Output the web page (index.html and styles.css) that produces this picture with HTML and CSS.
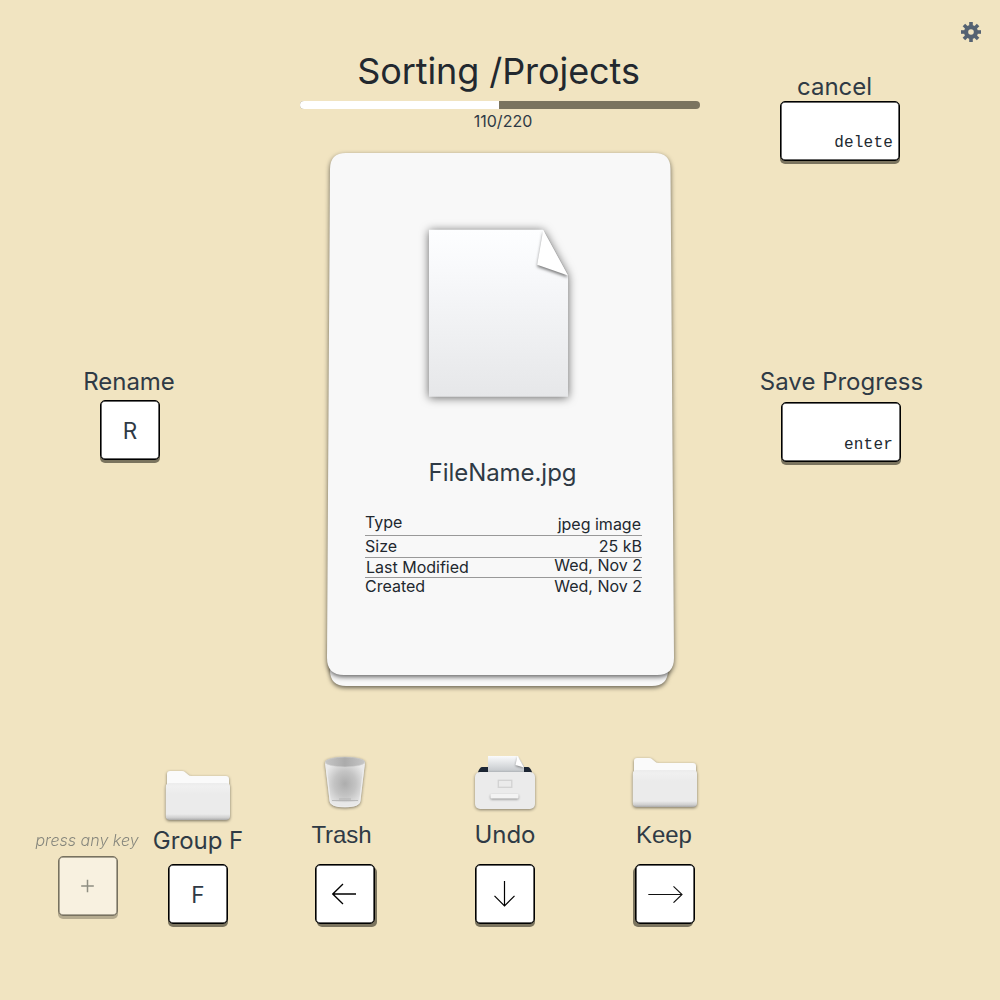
FILE: index.html
```html
<!DOCTYPE html>
<html lang="en">
<head>
<meta charset="utf-8">
<title>Sorting /Projects</title>
<link rel="stylesheet" href="styles.css">
</head>
<body>
<svg class="defs" aria-hidden="true">
  <defs>
    <linearGradient id="folderFront" x1="0" y1="0" x2="0" y2="1">
      <stop offset="0" stop-color="#ececec"/><stop offset=".1" stop-color="#f0f0f0"/>
      <stop offset=".3" stop-color="#ebebeb"/><stop offset=".84" stop-color="#ebebeb"/>
      <stop offset=".94" stop-color="#cfcfcf"/><stop offset="1" stop-color="#a9a9a9"/>
    </linearGradient>
    <symbol id="folder" viewBox="0 0 66 52" overflow="visible">
      <path d="M2 20V4Q2 1 5 1H17Q19 1 20.500 2.400L23.500 5Q24.500 6 26.500 6H61Q64 6 64 9V22H2Z" fill="#fafafa"/>
      <path d="M4.500 13H61.500Q65 13 65 16.500V46Q65 50 61 50H4.500Q.8 50 .8 46V17Q.8 13 4.500 13Z" fill="url(#folderFront)"/>
    </symbol>
  </defs>
</svg>
<main class="app">
  <div class="stage">
    <aside class="side side-left">
      <div class="control rename">
        <span class="label">Rename</span>
        <kbd class="key">R</kbd>
      </div>
    </aside>

    <section class="center">
      <h1 class="title">Sorting /Projects</h1>
      <div class="progress"><div class="progress-fill" style="width: 49.75%"></div></div>
      <div class="count">110/220</div>
      <article class="card">
        <svg class="card-shape" width="380" height="570" viewBox="310 143 380 570" aria-hidden="true">
          <path class="sheet-back" d="M330 640H668V670Q668 686 652 686H346Q330 686 330 670Z"/>
          <path class="sheet" d="M346 153H654.500Q670.500 153 670.500 169L674 658Q674 675 657 675H344Q327 675 327 658L330 169Q330 153 346 153Z"/>
        </svg>
        <div class="card-body">
          <svg class="file-icon" width="142" height="170" viewBox="0 0 142 170" overflow="visible" aria-hidden="true">
            <defs>
              <linearGradient id="paper" x1="0" y1="0" x2="0" y2="1">
                <stop offset="0" stop-color="#fdfeff"/><stop offset=".2" stop-color="#f9fafc"/><stop offset="1" stop-color="#e6e7e9"/>
              </linearGradient>
              <clipPath id="paperClip"><path d="M1 0H115.500L140.500 46V168H1Z"/></clipPath>
            </defs>
            <path class="file-page" d="M1 .8H115L140 46.500V167.800H1Z" fill="url(#paper)"/>
            <g clip-path="url(#paperClip)"><path class="file-fold" d="M115.200 1L109.200 35.800L140 46.500Z" fill="#fff"/></g>
          </svg>
          <h2 class="filename">FileName.jpg</h2>
          <dl class="meta">
            <div class="row row-type"><dt>Type</dt><dd>jpeg image</dd></div>
            <div class="row row-size"><dt>Size</dt><dd>25 kB</dd></div>
            <div class="row row-modified"><dt>Last Modified</dt><dd>Wed, Nov 2</dd></div>
            <div class="row row-created"><dt>Created</dt><dd>Wed, Nov 2</dd></div>
          </dl>
        </div>
      </article>
    </section>

    <aside class="side side-right">
      <svg class="gear" width="20" height="20" viewBox="0 0 20 20" aria-label="Settings">
        <g fill="#556272">
          <rect x="8.200" y="0" width="3.600" height="20"/>
          <rect x="8.200" y="0" width="3.600" height="20" transform="rotate(45 10 10)"/>
          <rect x="8.200" y="0" width="3.600" height="20" transform="rotate(90 10 10)"/>
          <rect x="8.200" y="0" width="3.600" height="20" transform="rotate(135 10 10)"/>
          <circle cx="10" cy="10" r="7"/>
        </g>
        <circle cx="10" cy="10" r="2.800" fill="#f1e4c1"/>
      </svg>
      <div class="control cancel">
        <span class="label">cancel</span>
        <kbd class="key key-wide">delete</kbd>
      </div>
      <div class="control save">
        <span class="label">Save Progress</span>
        <kbd class="key key-wide">enter</kbd>
      </div>
    </aside>
  </div>

  <nav class="actions">
    <div class="action add">
      <span class="hint">press any key</span>
      <kbd class="key key-ghost"><svg width="14" height="14" viewBox="0 0 14 14"><path d="M6.500 .7V13.300M.2 7H12.800" stroke="#2f3a45" stroke-width="1.500"/></svg></kbd>
    </div>
    <div class="action group">
      <svg class="icon folder" width="66" height="52"><use href="#folder"/></svg>
      <span class="label">Group F</span>
      <kbd class="key">F</kbd>
    </div>
    <div class="action trash">
      <svg class="icon bin" width="42" height="54" viewBox="0 0 42 54" overflow="visible">
        <defs>
          <radialGradient id="binBody" cx=".5" cy=".48" r=".55">
            <stop offset="0" stop-color="#adadad"/><stop offset=".5" stop-color="#c4c4c4"/><stop offset="1" stop-color="#eaeaea"/>
          </radialGradient>
          <linearGradient id="binTop" x1="0" y1="0" x2="1" y2="0">
            <stop offset="0" stop-color="#c6c6c6"/><stop offset=".5" stop-color="#ababab"/><stop offset="1" stop-color="#c6c6c6"/>
          </linearGradient>
        </defs>
        <path d="M1 6L5.600 45Q6.500 51.200 21 51.200T36.400 45L41 6Z" fill="url(#binBody)"/>
        <path d="M7.500 45.500Q21 47 34.500 45.500L33.500 48.500Q21 51.500 8.500 48.500Z" fill="#e8e8e8"/>
        <path d="M1.800 8L6.200 45Q7 50.700 21 50.700T35.800 45L40.200 8" fill="none" stroke="#ececec" stroke-width="1.300"/>
        <path d="M8 44.500H34M15 43H27" stroke="#aaa" stroke-width=".7"/>
        <ellipse cx="21" cy="6" rx="19.800" ry="4.900" fill="url(#binTop)" stroke="#d0d0d0" stroke-width=".5"/>
      </svg>
      <span class="label label-alt">Trash</span>
      <kbd class="key key-left"><svg width="26" height="22" viewBox="0 0 26 22"><path d="M24 11H.8M11 1L.8 11L11 21" fill="none" stroke="#000" stroke-width="1.300"/></svg></kbd>
    </div>
    <div class="action undo">
      <svg class="icon tray" width="60" height="54" viewBox="0 0 60 54" overflow="visible">
        <defs>
          <linearGradient id="trayPaper" x1="0" y1="0" x2="0" y2="1">
            <stop offset="0" stop-color="#fafbfc"/><stop offset="1" stop-color="#bfc3c7"/>
          </linearGradient>
        </defs>
        <path d="M7 11H53Q55 11 57 16V20H3V16Q5 11 7 11Z" fill="#1d2735"/>
        <path d="M13 0H43L49 10V17H13Z" fill="url(#trayPaper)"/>
        <path class="tray-fold" d="M42.500 0L40.500 9L49 11.500Z" fill="#fff"/>
        <rect class="tray-front" x="0" y="16" width="60" height="37" rx="5" fill="#ebebeb"/>
        <rect x="23.300" y="24.300" width="13.500" height="7" fill="#ebebeb" stroke="#d2d2d2" stroke-width="1.300"/>
        <rect class="tray-handle" x="15.500" y="38" width="28" height="4.500" rx="1" fill="#f3f3f3"/>
      </svg>
      <span class="label">Undo</span>
      <kbd class="key"><svg width="22" height="28" viewBox="0 0 22 28"><path d="M10.500 1V25.700M.5 15.800L10.500 26L20.500 15.800" fill="none" stroke="#000" stroke-width="1.200"/></svg></kbd>
    </div>
    <div class="action keep">
      <svg class="icon folder" width="66" height="52"><use href="#folder"/></svg>
      <span class="label label-alt">Keep</span>
      <kbd class="key key-right"><svg width="36" height="18" viewBox="0 0 36 18"><path d="M1.300 9.500H34.500M26.500 1.300L35 9.500L26.500 17.700" fill="none" stroke="#111" stroke-width="1.100"/></svg></kbd>
    </div>
  </nav>
</main>
</body>
</html>
```
FILE: styles.css
```css
* { box-sizing: border-box; }
body, h1, h2, dl, dd { margin: 0; font-weight: 400; }
body { background: #f1e4c1; color: #2f3a45; font-family: Inter, sans-serif; }
.defs { position: absolute; width: 0; height: 0; }
.app { width: 1000px; height: 1000px; overflow: hidden; display: flex; flex-direction: column; }
.stage { height: 720px; display: grid; grid-template-columns: 300px 400px 300px; }

.side { display: flex; flex-direction: column; }
.side-left { padding: 367px 0 0 69px; align-items: flex-start; }
.side-right { padding-top: 21.5px; }
.gear { align-self: flex-end; margin-right: 19.5px; }

.control { display: flex; flex-direction: column; align-items: center; }
.label { font-size: 24px; line-height: 30px; white-space: nowrap; letter-spacing: -.05px; }
.label-alt { font-family: "Liberation Sans", Arial, sans-serif; }
.rename { width: 120px; }
.rename .key { margin-top: 3px; margin-left: 2px; }
.cancel { width: 120px; margin: 30.5px 0 0 80px; }
.cancel .label { margin-left: -11px; }
.cancel .key { margin-top: -1px; }
.save { width: 164px; margin: 206px 0 0 59px; }
.save .label { margin-left: 1px; letter-spacing: 0; }
.save .key { margin-top: 5px; }

.key {
  display: flex; align-items: center; justify-content: center; flex: none;
  width: 60px; height: 60px; border: 1px solid #000; border-radius: 5px;
  background: #fff; box-shadow: inset 0 0 0 .75px rgba(0, 0, 0, .8), 0 3px 0 #7b745f;
  padding-top: 2px; font: 400 22.5px/30px Inter, sans-serif; color: #2f3a45;
}
.key:has(svg) { padding-top: 0; }
.key-wide {
  width: 120px; align-items: flex-end; justify-content: flex-end; padding: 0 6px 6px 0;
  font: 400 16px/22px "Liberation Mono", monospace; letter-spacing: .2px; color: #222a31;
}
.save .key-wide { padding: 0 7px 5px 0; }
.key-left { box-shadow: inset 0 0 0 .75px rgba(0, 0, 0, .8), 2px 3px 0 #7b745f; }
.key-right { box-shadow: inset 0 0 0 .75px rgba(0, 0, 0, .8), -2px 3px 0 #7b745f; }
.key-ghost { opacity: .5; }

.center { display: flex; flex-direction: column; align-items: center; padding-top: 48px; }
.title { font-size: 36px; line-height: 46px; color: #22282f; white-space: nowrap; margin-left: -3px; letter-spacing: -.08px; }
.progress { width: 400px; height: 8px; margin-top: 7px; border-radius: 4px; overflow: hidden; background: #7b745f; }
.progress-fill { height: 100%; background: #fff; }
.count { margin: 2px 0 22px 6px; font-size: 16px; line-height: 20px; }

.card { position: relative; width: 344px; height: 522px; }
.card-shape { position: absolute; left: -18px; top: -10px; }
.sheet-back { fill: #f8f8f8; filter: drop-shadow(0 2px 2px rgba(0, 0, 0, .55)); }
.sheet { fill: #f8f8f8; filter: drop-shadow(0 2px 2.5px rgba(0, 0, 0, .6)); }
.card-body { position: relative; display: flex; flex-direction: column; align-items: center; padding-top: 76px; }
.file-icon { margin-right: 3px; }
.file-page { filter: drop-shadow(0 1px 5px rgba(0, 0, 0, .6)); }
.file-fold { filter: drop-shadow(0 2px 1.5px rgba(0, 0, 0, .5)); }
.filename { margin: 59px 0 0 5px; font-size: 24px; line-height: 30px; letter-spacing: -.05px; }
.meta { width: 277px; margin: 24px 0 0 7px; font-size: 16px; line-height: 20px; color: #22282f; }
.row { display: flex; justify-content: space-between; border-bottom: 1px solid #999; }
.row-type { height: 24px; }
.row-type dd { padding: 2px 1px 0 0; }
.row-size { height: 22px; }
.row-modified { height: 20px; }
.row-modified dt { padding-left: 1px; margin-top: -1px; }
.row-modified dd { margin-top: -3px; }
.row-created { border: 0; margin-top: -2px; }

.actions { height: 280px; display: flex; padding-left: 28px; align-items: flex-start; }
.action { display: flex; flex-direction: column; align-items: center; flex: none; }
.action .key { margin-top: 8px; }
.icon { flex: none; }
.icon.folder { filter: drop-shadow(0 1px 1.5px rgba(0, 0, 0, .5)); }
.bin, .tray-front { filter: drop-shadow(0 1px 1.5px rgba(0, 0, 0, .45)); }
.tray-handle, .tray-fold { filter: drop-shadow(0 1.5px 1px rgba(0, 0, 0, .4)); }
.add { width: 120px; padding-top: 110px; }
.hint { margin-left: -2px; font-size: 16px; line-height: 20px; font-style: italic; font-weight: 300; opacity: .55; white-space: nowrap; }
.add .key { margin-top: 6px; }
.group { width: 100px; padding-top: 50px; }
.group .label { margin-top: 4px; }
.trash { width: 120px; margin-left: 37px; padding-top: 36px; }
.trash .label { margin: 10px 0 6px -7px; }
.undo { width: 120px; margin-left: 40px; padding-top: 36px; }
.undo .label { margin: 10px 0 6px 0; }
.keep { width: 120px; margin-left: 40px; padding-top: 37px; }
.keep .label { margin: 11px 0 6px -2px; }
```
